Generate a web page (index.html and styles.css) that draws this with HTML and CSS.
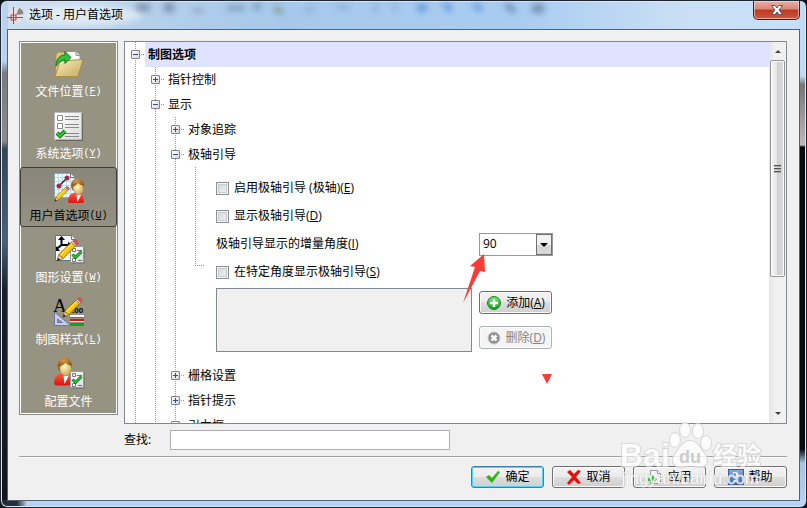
FILE: index.html
```html
<!DOCTYPE html>
<html lang="zh-CN">
<head>
  <meta charset="UTF-8" />
  <meta name="viewport" content="width=device-width, initial-scale=1.0" />
  <title>选项 - 用户首选项</title>
  <link rel="stylesheet" href="styles.css">
</head>
<body>

  <!-- shared gradients and icon parts -->
  <svg class="defs" width="0" height="0" aria-hidden="true">
    <defs>
      <linearGradient id="folder" x1="0" y1="0" x2="1" y2="1">
        <stop offset="0" stop-color="#f6edc0" /><stop offset="1" stop-color="#c9ab5e" />
      </linearGradient>
      <linearGradient id="paper" x1="0" y1="0" x2="1" y2="1">
        <stop offset="0" stop-color="#ffffff" /><stop offset="1" stop-color="#dcdcdc" />
      </linearGradient>
      <radialGradient id="skin" cx=".4" cy=".4" r=".7">
        <stop offset="0" stop-color="#fff9c8" /><stop offset="1" stop-color="#c9a443" />
      </radialGradient>
      <radialGradient id="hair" cx=".4" cy=".2" r=".8">
        <stop offset="0" stop-color="#d59a4c" /><stop offset="1" stop-color="#85500f" />
      </radialGradient>
      <linearGradient id="shirt" x1="0" y1="0" x2="0" y2="1">
        <stop offset="0" stop-color="#ff5a45" /><stop offset="1" stop-color="#d8100c" />
      </linearGradient>
      <linearGradient id="green" x1="0" y1="0" x2="0" y2="1">
        <stop offset="0" stop-color="#7fe07a" /><stop offset="1" stop-color="#12a01c" />
      </linearGradient>
      <linearGradient id="blue" x1="0" y1="0" x2="0" y2="1">
        <stop offset="0" stop-color="#86abe0" /><stop offset="1" stop-color="#3a68b0" />
      </linearGradient>
      <symbol id="person" viewBox="0 0 19 28">
        <path d="M1 25C1 19 4 16 9 16s9 3 9 9c0 2-2 2.500-9 2.500S1 27 1 25z" fill="url(#shirt)" />
        <path d="M10 18l1 8 4-8z" fill="#fff" />
        <ellipse cx="11" cy="8" rx="7" ry="7.500" fill="url(#hair)" />
        <ellipse cx="12" cy="11" rx="5.500" ry="6.500" fill="url(#skin)" />
        <path d="M5 9c3 0 6-2 7-4 1 2 3 3 6 3-1-4-3-6-7-6S5 5 5 9z" fill="url(#hair)" />
      </symbol>
      <symbol id="checklist" viewBox="0 0 15 18">
        <path d="M1.500 1.500h13v16h-13z" fill="#666" />
        <path d="M.5.5h13v16h-13z" fill="url(#paper)" stroke="#999" />
        <path d="M2.500 2.500h3v3h-3zM2.500 12.500h3v3h-3zM7 4.500h5M8 14.500h4" fill="#fff" stroke="#777" />
        <path d="M2.500 8.500l3 3 6-6" fill="none" stroke="#0b6d12" stroke-width="3" />
        <path d="M2.500 8.500l3 3 6-6" fill="none" stroke="#2fc43a" stroke-width="1.500" />
      </symbol>
      <symbol id="pencil" viewBox="0 0 24 24">
        <path d="M1 23l2-7 4.500 4.500z" fill="#f4c98b" stroke="#6b4a12" stroke-width=".6" />
        <path d="M1 23l1-3.500 2.500 2.500z" fill="#222" />
        <path d="M3 16L16 3.500 20 7.500 7.500 20.500z" fill="#f5c80e" stroke="#7a5a06" stroke-width=".8" />
        <path d="M4.500 17L17 4.700" stroke="#fff07a" />
        <path d="M16 3.500l1.500-1.500 4 4.500-1.500 1z" fill="#e4e4e4" stroke="#666" stroke-width=".6" />
        <path d="M17.500 2c1.500-1.500 3-1.500 4.500 0s1.500 3-.5 4.500z" fill="#e0594a" stroke="#a33" stroke-width=".5" />
      </symbol>
    </defs>
  </svg>

  <div class="window">
    <header class="titlebar">
      <svg class="glass" width="560" height="28" viewBox="0 0 560 28" aria-hidden="true">
        <ellipse cx="75" cy="14" rx="60" ry="10" fill="#fff" opacity=".5" />
        <g fill="#53698a" opacity=".6">
          <path d="M129 3h14v7h-14zM157 2h10v9h-10zM186 8h10v3h-10zM220 5h18v4h-18zM246 3h8v5h-8z" />
          <path d="M268 3l10 9h-10z" fill="#6b7042" />
          <path d="M297 11l9-8 3 2-9 8zM330 4h12v4h-12zM366 3h4v8h-4zM385 4h6v5h-6z" opacity=".5" />
          <path d="M408 4h14l-7 8zM434 3h10v9zM464 3h10v9z" fill="#2464bd" />
          <path d="M495 3h10l5 9h-6zM525 3h12v9h-12z" />
        </g>
      </svg>
      <svg class="app-icon" width="17" height="17" viewBox="0 0 17 17" aria-hidden="true">
        <circle cx="9" cy="8" r="7.500" fill="#e4dfe0" />
        <path d="M9 8L12 1c3 1 4 3 4.500 6z" fill="#8b8789" />
        <path d="M6.500 0v17M0 10.500h16" stroke="#c23a42" />
        <path d="M4 8h5v5H4z" fill="#f5d8d8" stroke="#c23a42" />
        <path d="M6.500 8v5M4 10.500h5" stroke="#c23a42" />
      </svg>
      <h1 class="title">选项 - 用户首选项</h1>
      <button class="close" type="button" aria-label="关闭">
        <svg width="12" height="10" viewBox="0 0 12 10">
          <path d="M.5.5h3.500l2 2.500 2-2.500h3.500L8 5l3.500 4.500H8L6 7 4 9.500H.5L4 5z" fill="#fff" stroke="#555b6b" />
        </svg>
      </button>
    </header>

    <form class="client" onsubmit="return false">
      <div class="main">
        <nav class="sidebar">
          <button class="nav-item" type="button">
            <svg width="32" height="32" viewBox="0 0 32 32">
              <path d="M3 7l2-2h7l2 2h5v22H2z" fill="#d9c47c" stroke="#a98d44" />
              <path d="M12 4.500h11l4 4V22H12z" fill="#fff" stroke="#8d99aa" />
              <path d="M23 4.500v4h4" fill="#d5dbe4" stroke="#8d99aa" />
              <path d="M2 29.500L7 14l23-1.500-5 17z" fill="url(#folder)" stroke="#ab8e45" />
              <path d="M3 19c0-8 5-11 9-11V4.500l6 6-6 6V13c-4 0-6 2-9 6z" fill="#2fc13b" stroke="#0b7519" />
            </svg>
            <span class="nav-label">文件位置<span class="key">(<u>F</u>)</span></span>
          </button>
          <button class="nav-item" type="button">
            <svg width="32" height="32" viewBox="0 0 32 32">
              <path d="M3 5h27v27H3z" fill="#6a685c" />
              <path d="M1.500 3.500h27v27h-27z" fill="url(#paper)" stroke="#bbb" />
              <path d="M4.500 6.500h5v5h-5zM4.500 14.500h5v5h-5z" fill="#fff" stroke="#8a8a8a" />
              <path d="M12 7.500h14M12 10.500h14M12 15.500h14M12 18.500h14M12 24.500h14M12 27.500h14" stroke="#8a8a8a" />
              <path d="M4 24l3 3 5-5" fill="none" stroke="#0b7512" stroke-width="4" />
              <path d="M4 24l3 3 5-5" fill="none" stroke="#37c53c" stroke-width="2" />
            </svg>
            <span class="nav-label">系统选项<span class="key">(<u>Y</u>)</span></span>
          </button>
          <button class="nav-item selected" type="button" aria-current="page">
            <svg width="32" height="32" viewBox="0 0 32 32">
              <path d="M1.500 2.500h16l4 4v20h-20z" fill="#f2fbff" stroke="#8aa5bd" />
              <path d="M5.500 3v23M9.500 3v23M13.500 3v23M17.500 3v23M2 6.500h19M2 10.500h19M2 14.500h19M2 18.500h19M2 22.500h19" stroke="#b7dcef" />
              <path d="M17.500 2.500v4h4" fill="#fff" stroke="#567" />
              <path d="M6 15l8-8" stroke="#222" stroke-width="1.500" />
              <circle cx="6" cy="15" r="2.500" fill="#a8284f" /><circle cx="14" cy="7" r="2.500" fill="#a8284f" />
              <use href="#pencil" x="1" y="15" width="16" height="16" />
              <use href="#person" x="14" y="7" width="18" height="26" />
            </svg>
            <span class="nav-label">用户首选项<span class="key">(<u>U</u>)</span></span>
          </button>
          <button class="nav-item" type="button">
            <svg width="32" height="32" viewBox="0 0 32 32">
              <path d="M2.500 2.500h16l4 4v21h-20z" fill="#f4f8fd" stroke="#60758a" />
              <path d="M18.500 2.500v4h4" fill="#fff" stroke="#60758a" />
              <path d="M8.500 5v7l-5 4M8.500 12h9" fill="none" stroke="#000" stroke-width="2" />
              <path d="M5 7l3.500-4L12 7zM15 9l5 3-5 3zM3 13v5h4z" fill="#000" />
              <use href="#checklist" x="17" y="13" width="15" height="18" />
              <use href="#pencil" x="3" y="6" width="23" height="23" />
            </svg>
            <span class="nav-label">图形设置<span class="key">(<u>W</u>)</span></span>
          </button>
          <button class="nav-item" type="button">
            <svg width="32" height="32" viewBox="0 0 32 32">
              <text class="icon-letter" x="0" y="17">A</text>
              <text class="icon-digits" x="19" y="18">.00</text>
              <path d="M17 20h14v2H17z" fill="#fff" /><path d="M17 22h14v1H17z" fill="#3d6ed0" />
              <path d="M17 24h14v2H17z" fill="#e01010" /><path d="M17 26h14v1H17z" fill="#fff" />
              <path d="M17 28h14v3H17z" fill="#08a812" />
              <path d="M1.500 17v13.500h16zM4.500 24v3.500h5z" fill="#c8cfee" stroke="#6a76ac" fill-rule="evenodd" />
              <use href="#pencil" x="9" y="2" width="21" height="21" />
            </svg>
            <span class="nav-label">制图样式<span class="key">(<u>L</u>)</span></span>
          </button>
          <button class="nav-item" type="button">
            <svg width="32" height="32" viewBox="0 0 32 32">
              <use href="#person" x="0" y="0" width="20" height="29" />
              <use href="#checklist" x="17" y="14" width="15" height="18" />
            </svg>
            <span class="nav-label">配置文件</span>
          </button>
        </nav>

        <div class="panel">
          <div class="tree-view">
            <ul class="tree">
              <li>
                <div class="row root"><button class="toggle" type="button" aria-label="折叠"></button><span class="row-label">制图选项</span></div>
                <ul class="tree">
                  <li><div class="row"><button class="toggle plus" type="button" aria-label="展开"></button><span class="row-label">指针控制</span></div></li>
                  <li>
                    <div class="row"><button class="toggle" type="button" aria-label="折叠"></button><span class="row-label">显示</span></div>
                    <ul class="tree">
                      <li><div class="row"><button class="toggle plus" type="button" aria-label="展开"></button><span class="row-label">对象追踪</span></div></li>
                      <li>
                        <div class="row"><button class="toggle" type="button" aria-label="折叠"></button><span class="row-label">极轴引导</span></div>
                        <div class="settings">
                          <label class="line"><input type="checkbox">启用极轴引导 (极轴)(<u>E</u>)</label>
                          <label class="line"><input type="checkbox">显示极轴引导(<u>D</u>)</label>
                          <label class="line" for="angle">极轴引导显示的增量角度(<u>I</u>)</label>
                          <div class="select-box">
                            <select id="angle"><option>90</option><option>45</option><option>30</option></select>
                          </div>
                          <label class="line"><input type="checkbox">在特定角度显示极轴引导(<u>S</u>)</label>
                          <div class="angle-list" role="listbox" aria-label="特定角度"></div>
                          <div class="list-actions">
                            <button class="btn" type="button">
                              <svg width="16" height="16" viewBox="0 0 16 16">
                                <circle cx="8" cy="8" r="6.500" fill="url(#green)" stroke="#12851b" />
                                <path d="M8 4v8M4 8h8" stroke="#fff" stroke-width="2.500" />
                              </svg>
                              <span>添加(<u>A</u>)</span>
                            </button>
                            <button class="btn" type="button" disabled>
                              <svg width="16" height="16" viewBox="0 0 16 16">
                                <circle cx="8" cy="8" r="6" fill="#8f8f8f" stroke="#c5c5c5" />
                                <path d="M5.500 5.500l5 5M10.500 5.500l-5 5" stroke="#fff" stroke-width="2.500" />
                              </svg>
                              <span>删除(<u>D</u>)</span>
                            </button>
                          </div>
                          <svg class="marks" width="380" height="220" viewBox="0 0 380 220" aria-hidden="true">
                            <path d="M299 87l-14 12 5 1-12 36 17-32 5 1z" fill="#fb3b36" />
                            <path d="M357 207h10l-5 10z" fill="#fb3b36" />
                          </svg>
                        </div>
                      </li>
                      <li><div class="row"><button class="toggle plus" type="button" aria-label="展开"></button><span class="row-label">栅格设置</span></div></li>
                      <li><div class="row"><button class="toggle plus" type="button" aria-label="展开"></button><span class="row-label">指针提示</span></div></li>
                      <li><div class="row"><button class="toggle plus" type="button" aria-label="展开"></button><span class="row-label">引力框</span></div></li>
                    </ul>
                  </li>
                </ul>
              </li>
            </ul>
          </div>
          <div class="scrollbar" aria-hidden="true">
            <span class="arrow up"></span>
            <div class="track"><div class="thumb"><span class="grip"></span></div></div>
            <span class="arrow down"></span>
          </div>
        </div>
      </div>

      <div class="search">
        <label for="search">查找:</label>
        <input id="search" type="text">
      </div>

      <footer class="footer">
        <button class="btn default" type="submit">
          <svg width="16" height="16" viewBox="0 0 16 16"><path d="M1 8l3-2 3 3 6-7 2 1-8 11z" fill="#2bb80f" /></svg>
          <span>确定</span>
        </button>
        <button class="btn" type="button">
          <svg width="16" height="16" viewBox="0 0 16 16"><path d="M1 3l3-2 4 4 4-4 3 1-5 6 5 6-3 1-4-4-5 5-2-2 5-6z" fill="#e90f0f" /></svg>
          <span>取消</span>
        </button>
        <button class="btn" type="button">
          <svg width="16" height="16" viewBox="0 0 16 16">
            <path d="M3.500 1.500h7l3 3v10h-10z" fill="#f3f3f3" stroke="#999" />
            <path d="M10.500 1.500v3h3" fill="#fff" stroke="#999" />
            <path d="M1 9h4V6l5 4.500L5 15v-3H1z" fill="#35b838" />
          </svg>
          <span>应用</span>
        </button>
        <button class="btn" type="button">
          <svg width="16" height="16" viewBox="0 0 16 16">
            <rect x=".5" y=".5" width="15" height="15" fill="url(#blue)" stroke="#34609f" />
            <text class="icon-help" x="4" y="13">?</text>
          </svg>
          <span>帮助</span>
        </button>
      </footer>
    </form>

    <svg class="watermark" width="160" height="76" viewBox="0 0 160 76" aria-hidden="true">
      <g class="mark">
        <text class="mark-name" x="0" y="44">Bai</text>
        <path d="M70 19c-8 0-9 7-14 12-5 5-4 13 3 14 5 0 7-1 11-1s6 1 11 1c7-1 8-9 3-14-5-5-6-12-14-12z" />
        <ellipse cx="55" cy="18" rx="5" ry="7" />
        <ellipse cx="65" cy="8" rx="5" ry="7" />
        <ellipse cx="78" cy="9" rx="5" ry="7" />
        <ellipse cx="86" cy="21" rx="5" ry="7" />
        <text class="mark-cn" x="93" y="42">经验</text>
        <text class="mark-url" x="2" y="62">jingyan.baidu.com</text>
      </g>
      <text class="mark-du" x="59" y="41">du</text>
    </svg>
  </div>

</body>
</html>
```
FILE: styles.css
```css
* {
  box-sizing: border-box;
}
body {
  margin: 0;
  height: 100vh;
  overflow: hidden;
  background: #10151c;
  color: #000;
  font-family: 'Open Sans', 'Noto Sans CJK SC', sans-serif;
  font-size: 12px;
  line-height: 18px;
}
button, input, select {
  font: inherit;
  color: inherit;
}
button {
  padding: 0;
}
.defs {
  position: absolute;
}

/* Window frame */
.window {
  position: relative;
  display: flex;
  flex-direction: column;
  height: 100vh;
  padding: 0 6px 6px;
  border: 1px solid #1f2530;
  border-radius: 7px;
  box-shadow: inset 0 0 0 1px #d6e6f5;
  background:
    linear-gradient(90deg, #202b38 0, #26303c 16px, transparent 26px) left bottom / 100% 7px no-repeat,
    linear-gradient(#bad7f5, #b0d0f2) left bottom / 100% 7px no-repeat,
    linear-gradient(#b8d3ee 0, #b8d3ee 60px, #767b82 72px, #8c8c8c 140px, #32465a 148px, #4b6178 240px, #15202b 290px, #10161d 100%) left top / 7px 100% no-repeat,
    linear-gradient(#bfdaf5 0, #bfdaf5 75px, #777 84px, #bbb 144px, #070b10 146px, #070b10 448px, #a5c4e6 462px, #b4d2f2 100%) right top / 7px 100% no-repeat,
    linear-gradient(90deg, #cfe0f0 0, #b5d0ea 18%, #a6c9eb 35%, #a9cdf1 65%, #cadff5 85%, #c5dff8 100%);
}
.titlebar {
  position: relative;
  display: flex;
  align-items: center;
  flex: none;
  height: 28px;
}
.glass {
  position: absolute;
  left: 0;
  top: 0;
  filter: blur(3px);
}
.app-icon {
  position: relative;
  margin-right: 5px;
}
.title {
  position: relative;
  flex: 1;
  margin: 0;
  font-size: 12px;
  font-weight: normal;
}
.close {
  position: relative;
  display: flex;
  align-items: center;
  justify-content: center;
  align-self: flex-start;
  width: 47px;
  height: 19px;
  border: 1px solid #4a1a18;
  border-top: none;
  border-radius: 0 0 5px 5px;
  box-shadow: inset 0 0 0 1px rgba(255, 225, 215, 0.6);
  background: linear-gradient(#eab0a5 0, #d98577 45%, #bd3823 50%, #d0573d 100%);
}

/* Client area */
.client {
  flex: 1;
  min-height: 0;
  display: flex;
  flex-direction: column;
  padding: 11px 12px 12px 11px;
  border: 1px solid #56616c;
  background: #f0f0f0;
}
.main {
  flex: 1;
  min-height: 0;
  display: flex;
  align-items: flex-start;
  gap: 6px;
}

/* Category bar */
.sidebar {
  display: flex;
  flex-direction: column;
  flex: none;
  width: 99px;
  border: 1px solid #888a8c;
  box-shadow: inset 0 0 0 1px #fff;
  background: #979383;
}
.nav-item {
  display: flex;
  flex-direction: column;
  align-items: center;
  gap: 4px;
  height: 60px;
  margin: 1px 0;
  padding-top: 3px;
  border: 1px solid transparent;
  border-radius: 3px;
  background: none;
  color: #fff;
}
.nav-item.selected {
  border-color: #3e3c35;
  background: linear-gradient(#88857a, #959181);
  color: #000;
}
.nav-label {
  display: flex;
  white-space: nowrap;
}
.key {
  font-family: 'Liberation Mono', monospace;
  font-size: 10px;
}
.icon-letter {
  font: 19px 'Liberation Serif', serif;
}
.icon-digits {
  font: bold 8px 'Liberation Sans', sans-serif;
}
.icon-help {
  font: bold 14px 'Liberation Serif', serif;
  fill: #fff;
}

/* Options tree */
.panel {
  flex: 1;
  min-width: 0;
  align-self: stretch;
  display: flex;
  border: 1px solid #828790;
  background: #fff;
}
.tree-view {
  flex: 1;
  min-width: 0;
  overflow: hidden;
}
.tree {
  margin: 0;
  padding: 0;
  list-style: none;
  background: repeating-linear-gradient(#999 0 1px, transparent 1px 2px) 10px 0 / 1px 100% no-repeat;
}
.tree .tree {
  margin-left: 20px;
}
.row {
  display: flex;
  align-items: center;
  height: 25px;
  padding-left: 6px;
}
.row::before {
  content: "";
  order: 1;
  width: 5px;
  height: 1px;
  background: repeating-linear-gradient(90deg, transparent 0 1px, #999 1px 2px);
}
.toggle {
  width: 9px;
  height: 9px;
  border: 1px solid #848484;
  border-radius: 1px;
  background:
    linear-gradient(#2b4f9e, #2b4f9e) center / 5px 1px no-repeat,
    linear-gradient(135deg, #fff, #d8d8d8);
}
.toggle.plus {
  background:
    linear-gradient(#2b4f9e, #2b4f9e) center / 5px 1px no-repeat,
    linear-gradient(#2b4f9e, #2b4f9e) center / 1px 5px no-repeat,
    linear-gradient(135deg, #fff, #d8d8d8);
}
.row-label {
  order: 2;
  flex: 1;
  padding-left: 3px;
  line-height: 25px;
}
.root .row-label {
  background: #dfe3ff;
  font-weight: bold;
}

/* Polar guide settings */
.settings {
  position: relative;
  display: grid;
  grid-template-columns: 256px 74px;
  column-gap: 7px;
  margin-left: 20px;
  padding: 7px 0 11px 31px;
  background:
    repeating-linear-gradient(#999 0 1px, transparent 1px 2px) 10px 0 / 1px 98px no-repeat,
    repeating-linear-gradient(90deg, #999 0 1px, transparent 1px 2px) 10px 98px / 10px 1px no-repeat;
}
.line {
  grid-column: 1;
  display: flex;
  align-items: center;
  height: 28px;
  white-space: pre;
}
.line input {
  appearance: none;
  width: 13px;
  height: 13px;
  margin: 0 5px 0 0;
  border: 1px solid #8e8f8f;
  box-shadow: inset 0 0 0 1px #f4f4f4, inset 0 0 0 2px #c8cbd0;
  background: linear-gradient(135deg, #cdd1d7, #f6f6f6);
}
.select-box {
  position: relative;
  align-self: center;
}
.select-box select {
  appearance: none;
  display: block;
  width: 100%;
  height: 23px;
  padding: 0 3px;
  border: 1px solid #999;
  border-radius: 0;
  background: #fff;
}
.select-box::before {
  content: "";
  position: absolute;
  top: 1px;
  right: 1px;
  box-sizing: border-box;
  width: 16px;
  height: 21px;
  border: 1px solid #707070;
  background: linear-gradient(#f2f2f2 50%, #d8d8d8 50%);
  pointer-events: none;
}
.select-box::after {
  content: "";
  position: absolute;
  top: 10px;
  right: 5px;
  border: 4px solid transparent;
  border-top-color: #000;
  border-bottom: none;
  pointer-events: none;
}
.angle-list {
  grid-column: 1;
  height: 64px;
  margin-top: 2px;
  border: 1px solid #828790;
  background: #f0f0f0;
}
.list-actions {
  display: flex;
  flex-direction: column;
  gap: 12px;
  padding-top: 5px;
}
.marks {
  position: absolute;
  left: 0;
  top: 0;
  pointer-events: none;
}

/* Buttons */
.btn {
  display: flex;
  align-items: center;
  justify-content: center;
  gap: 4px;
  width: 73px;
  height: 23px;
  border: 1px solid #707070;
  border-radius: 3px;
  box-shadow: inset 0 0 0 1px #fbfbfb;
  background: linear-gradient(#f2f2f2 0, #ebebeb 50%, #dddddd 50%, #cfcfcf 100%);
  white-space: nowrap;
}
.btn.default {
  border-color: #3c7fb1;
  box-shadow: inset 0 0 0 1px #48d8fb;
}
.btn:disabled {
  border-color: #adb2b5;
  background: #f4f4f4;
  color: #838383;
}

/* Scrollbar */
.scrollbar {
  display: flex;
  flex-direction: column;
  flex: none;
  width: 17px;
  padding: 0 1px;
  background: linear-gradient(90deg, #e4e4e4, #f0f0f0 30%, #f2f2f2);
}
.arrow {
  align-self: center;
  margin: 7px 0;
  border: 3px solid transparent;
}
.up {
  border-top: 1px solid transparent;
  border-bottom-color: #444;
}
.down {
  border-bottom: 1px solid transparent;
  border-top-color: #444;
}
.track {
  flex: 1;
}
.thumb {
  display: flex;
  align-items: center;
  justify-content: center;
  height: 63%;
  border: 1px solid #979797;
  border-radius: 2px;
  box-shadow: inset 0 0 0 1px #fafafa;
  background: linear-gradient(90deg, #f4f4f4 0, #e6e6e6 45%, #cfcfd2 50%, #dcdcde 100%);
}
.grip {
  width: 7px;
  height: 8px;
  background: repeating-linear-gradient(#555 0 1px, #aaa 1px 2px, transparent 2px 3px);
}

/* Search and footer */
.search {
  display: flex;
  align-items: center;
  gap: 14px;
  margin: 6px 0 6px 105px;
}
.search label {
  width: 32px;
  white-space: nowrap;
}
.search input {
  width: 280px;
  height: 20px;
  padding: 0 4px;
  border: 1px solid #abadb3;
  background: #fff;
}
.footer {
  display: flex;
  justify-content: flex-end;
  gap: 8px;
  padding-top: 9px;
  border-top: 1px solid #a0a0a0;
  box-shadow: inset 0 1px 0 #fff;
}
.footer .btn {
  height: 22px;
}

/* Watermark */
.watermark {
  position: absolute;
  right: 26px;
  bottom: 9px;
  pointer-events: none;
}
.mark {
  fill: #fff;
  stroke: #d2d2d2;
  stroke-width: 2px;
  paint-order: stroke;
  opacity: 0.8;
}
.mark-name {
  font: bold 32px 'Liberation Sans', sans-serif;
}
.mark-cn {
  font: bold 24px 'Noto Sans CJK SC', sans-serif;
}
.mark-url {
  font: 17px 'Liberation Sans', sans-serif;
  stroke-width: 1px;
}
.mark-du {
  font: bold 18px 'Liberation Sans', sans-serif;
  fill: #ccc;
}
```
